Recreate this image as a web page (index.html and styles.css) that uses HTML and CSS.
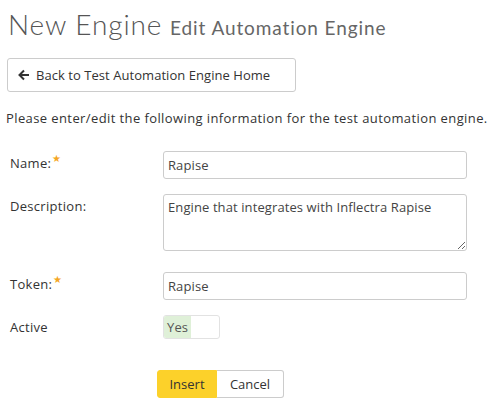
FILE: index.html
```html
<!DOCTYPE html>
<html>
<head>
<meta charset="utf-8">
<link rel="stylesheet" href="styles.css">
</head>
<body>
<h1 class="title"><span class="title-main">New Engine</span> <span class="title-sub">Edit Automation Engine</span></h1>
<button class="back-btn"><svg class="arrow" width="12" height="12" viewBox="0 0 12 12"><path d="M6 1.5 L1.5 6 L6 10.5 M1.5 6 H11" fill="none" stroke="#333" stroke-width="2" stroke-linejoin="miter"/></svg>Back to Test Automation Engine Home</button>
<p class="intro">Please enter/edit the following information for the test automation engine.</p>
<div class="form">
  <div class="row r-name">
    <label class="lbl">Name:<span class="star">★</span></label>
    <input class="field" type="text" value="Rapise">
  </div>
  <div class="row r-desc">
    <label class="lbl">Description:</label>
    <textarea class="field ta">Engine that integrates with Inflectra Rapise</textarea>
  </div>
  <div class="row r-token">
    <label class="lbl">Token:<span class="star">★</span></label>
    <input class="field" type="text" value="Rapise">
  </div>
  <div class="row r-active">
    <label class="lbl lbl-active">Active</label>
    <div class="toggle"><span class="yes">Yes</span><span class="off"></span></div>
  </div>
  <div class="actions">
    <button class="btn insert">Insert</button><button class="btn cancel">Cancel</button>
  </div>
</div>
</body>
</html>
```
FILE: styles.css
```css
body {
  margin: 0;
  padding: 0 6px;
  font-family: "Open Sans", sans-serif;
  font-size: 13px;
  color: #333;
  background: #fff;
}
.title {
  margin: 7px 0 0 2px;
  font-weight: normal;
  line-height: 34px;
  white-space: nowrap;
}
.title-main {
  font-family: "Lato", sans-serif;
  font-weight: 300;
  font-size: 28px;
  color: #555;
  letter-spacing: 0.9px;
}
.title-sub {
  font-family: "Lato", sans-serif;
  font-size: 19px;
  color: #666;
  font-weight: 400;
  letter-spacing: 0.9px;
  margin-left: 1px;
}
.back-btn {
  margin: 13px 0 0 1px;
  display: flex;
  align-items: center;
  gap: 6px;
  height: 34px;
  width: 289px;
  padding: 0 10px;
  border: 1px solid #ccc;
  border-radius: 3px;
  background: #fff;
  font-family: "Open Sans", sans-serif;
  font-size: 13px;
  letter-spacing: 0.05px;
  color: #333;
}
.arrow { flex: none; }
.intro {
  margin: 17px 0 0 0;
  line-height: 18px;
  letter-spacing: 0.4px;
  white-space: nowrap;
}
.form {
  margin-top: 24px;
}
.row {
  display: flex;
  align-items: flex-start;
}
.r-name { margin-bottom: 15px; }
.r-desc { margin-bottom: 21px; }
.r-token { margin-bottom: 15px; }
.lbl {
  width: 157px;
  padding-left: 4px;
  box-sizing: border-box;
  line-height: 24px;
  letter-spacing: 0.3px;
}
.lbl-active { line-height: 24px; }
.star {
  color: #f5a623;
  font-size: 10px;
  position: relative;
  top: -6px;
  margin-left: 1px;
}
.field {
  width: 304px;
  height: 28px;
  box-sizing: border-box;
  border: 1px solid #ccc;
  border-radius: 3px;
  padding: 0 5px 0 4px;
  font-family: "Open Sans", sans-serif;
  font-size: 13px;
  letter-spacing: 0.1px;
  color: #444;
  margin: 0;
}
.ta {
  height: 57px;
  padding: 3px 5px 3px 4px;
  resize: vertical;
}
.toggle {
  display: flex;
  width: 57px;
  height: 24px;
  box-sizing: border-box;
  border: 1px solid #e2e2e2;
  border-radius: 3px;
  overflow: hidden;
}
.yes {
  width: 27px;
  background: #dff0d8;
  line-height: 22px;
  text-align: center;
  color: #555;
}
.off { flex: 1; }
.actions {
  display: flex;
  padding-left: 151px;
  margin-top: 31px;
}
.btn {
  height: 28px;
  font-family: "Open Sans", sans-serif;
  font-size: 13px;
  color: #333;
  border: 1px solid #ccc;
  background: #fff;
  margin: 0;
}
.insert {
  width: 60px;
  background: #fcd12a;
  border-color: #fcd12a;
  border-radius: 3px 0 0 3px;
}
.cancel {
  width: 67px;
  border-left: none;
  border-radius: 0 3px 3px 0;
}
```
